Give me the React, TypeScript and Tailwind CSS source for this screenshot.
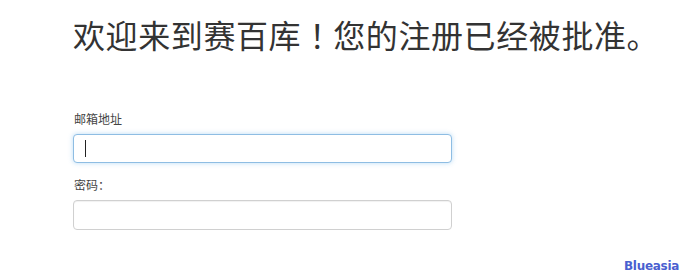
import React from "react";

export default function App() {
  const cjk = { fontFamily: '"Noto Sans CJK SC", "Liberation Sans", sans-serif' };
  return (
    <div className="relative w-[684px] h-[272px] bg-white overflow-hidden" style={cjk}>
      <div className="pl-[73px] pt-[14px]">
        <h1 className="text-[32px] leading-[40px] text-[#333] font-normal tracking-[0.6px] whitespace-nowrap">
          欢迎来到赛百库<span className="tracking-normal" style={{ fontFamily: '"Noto Sans CJK TC", sans-serif' }}>！</span>您的注册已经被批准。
        </h1>
        <div className="mt-[57px] flex flex-col">
          <label className="text-[12px] leading-[16px] text-[#444] pl-[1px]">邮箱地址</label>
          <div className="mt-[7px] w-[379px] h-[29px] rounded-[4px] border border-[#8ebde3] shadow-[0_0_5px_rgba(102,175,233,0.45)] bg-white flex items-center pl-[11px]">
            <span className="block w-[1px] h-[17px] bg-[#222]" />
          </div>
          <label className="mt-[14px] text-[12px] leading-[16px] text-[#444] pl-[1px]">密码：</label>
          <div className="mt-[7px] w-[379px] h-[30px] rounded-[4px] border border-[#d0d0d0] bg-white shadow-[inset_0_1px_1px_rgba(0,0,0,0.06)]" />
        </div>
      </div>
      <div
        className="absolute left-[624px] top-[260px] text-[12px] leading-[12px] font-bold text-[#4a5fd0] tracking-[-0.3px]"
        style={{ fontFamily: '"DejaVu Sans", Verdana, sans-serif' }}
      >
        Blueasia
      </div>
    </div>
  );
}
